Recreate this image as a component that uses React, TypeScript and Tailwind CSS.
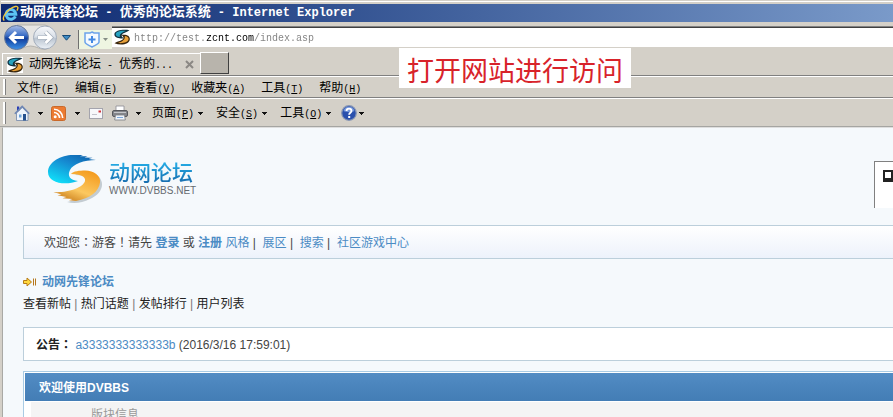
import React from 'react';

const menus = [
  { label: '文件', hotkey: 'F' },
  { label: '编辑', hotkey: 'E' },
  { label: '查看', hotkey: 'V' },
  { label: '收藏夹', hotkey: 'A' },
  { label: '工具', hotkey: 'T' },
  { label: '帮助', hotkey: 'H' },
];

const commands = [
  { label: '页面', hotkey: 'P' },
  { label: '安全', hotkey: 'S' },
  { label: '工具', hotkey: 'O' },
];

const quickLinks = ['查看新帖', '热门话题', '发帖排行', '用户列表'];

function Hotkey({ letter }: { letter: string }) {
  return (
    <span className="font-['Liberation_Mono',monospace] text-[10px]">
      (<span className="underline underline-offset-1">{letter}</span>)
    </span>
  );
}

// full width punctuation that sits in the middle of its cell
function Punct({ children }: { children: React.ReactNode }) {
  return <span className="font-['Noto_Sans_CJK_TC',sans-serif]">{children}</span>;
}

function Caret() {
  return (
    <svg className="w-[6px] h-[3px]" viewBox="0 0 6 3" shapeRendering="crispEdges">
      <path d="M0 0h5v1H0zM1 1h3v1H1zM2 2h1v1H2z" fill="#111" />
    </svg>
  );
}

function Grip() {
  return <span className="w-[3px] self-stretch my-[2px] shrink-0 border-l border-l-white border-r border-r-[#808080] bg-white" />;
}

function IeLogo() {
  return (
    <svg className="w-[17px] h-[17px]" viewBox="0 0 16 16" fill="none">
      <path d="M12.6 10.8A4.6 4.6 0 1 1 13 8.6H4.6" stroke="#5cc3f4" strokeWidth="2.8" />
      <path d="M2.2 14.6C-.4 12.5 3 7 7.5 3.8 11 1.3 14.8.4 15 2.5c.1 1-.5 2-1 2.800" stroke="#f6c93b" strokeWidth="1.300" />
    </svg>
  );
}

function Favicon() {
  return (
    <svg className="w-4 h-4 shrink-0 bg-white" viewBox="0 0 16 16">
      <path d="M15.500 1.200C10 .2.6.8.4 5.300c-.1 3.200 4.100 4.700 9.200 3.900C7.300 7.800 7 5.800 9.500 4.300c1.700-1 4-1.500 6-3.100z" fill="#12313f" />
      <path d="M12 2C7 1.400 1.800 2.600 1.700 5.300c-.1 1.600 1.700 2.600 4.300 2.800C5 5.600 7.200 3.400 12 2z" fill="#27a3c0" />
      <path d="M.5 14.200c6.500 2.600 15 1.200 15.300-4C16 6.800 12.500 5 7.200 6c3 1.400 2.900 3.900.2 5.200-2 1-4.900 1.400-6.900 3z" fill="#38250c" />
      <path d="M4 14c5.500.7 10.400-.9 10.600-3.900.1-1.700-1.600-2.900-3.900-3 .7 3.200-1.700 5.400-6.700 6.900z" fill="#e8a038" />
    </svg>
  );
}

function NavButtons() {
  return (
    <div className="w-[57px] h-7 relative">
      <svg className="absolute inset-0 w-full h-full" viewBox="0 0 57 28">
        <defs>
          <linearGradient id="back" x1="0" y1="0" x2="0" y2="1">
            <stop offset="0" stopColor="#a9bde6" />
            <stop offset=".4" stopColor="#3f71c8" />
            <stop offset=".55" stopColor="#123f9d" />
            <stop offset="1" stopColor="#3c91e8" />
          </linearGradient>
          <linearGradient id="fwd" x1="0" y1="0" x2="0" y2="1">
            <stop offset="0" stopColor="#f8f9fb" />
            <stop offset=".45" stopColor="#dbe1e9" />
            <stop offset=".55" stopColor="#bcc6d2" />
            <stop offset="1" stopColor="#edf2f7" />
          </linearGradient>
        </defs>
        <path d="M14 3h28a12.500 12.500 0 0 1 0 24.500c-5 0-9-3.500-14.500-3.500S19 27.500 14 27.500z" fill="#e6e5e3" stroke="#b5b3ae" />
        <circle cx="13.500" cy="15.500" r="12" fill="url(#back)" stroke="#65799c" />
        <circle cx="42" cy="15.500" r="11.500" fill="url(#fwd)" stroke="#a3adbb" />
        <path d="M21 15.500H7.500M13 10l-5.500 5.500L13 21" fill="none" stroke="#fff" strokeWidth="3" />
        <path d="M34.500 15.500H48M42.500 10l5.500 5.500-5.500 5.500" fill="none" stroke="#a3adba" strokeWidth="4.200" />
        <path d="M35 15.500h13M42.500 10l5.500 5.500-5.500 5.500" fill="none" stroke="#fff" strokeWidth="2.800" />
      </svg>
      <button type="button" aria-label="后退" className="absolute left-0 top-0 w-7 h-7 rounded-full" />
      <button type="button" aria-label="前进" className="absolute right-0 top-0 w-7 h-7 rounded-full" />
    </div>
  );
}

function TitleBar() {
  return (
    <div className="border-t border-[#d4d0c8] pl-px">
      <div className="border-t border-white pt-[2px]">
        <div className="h-[18px] flex items-center gap-px bg-linear-to-r from-[#0e2870] to-[#7a9ac9] text-white font-bold font-['Liberation_Mono','Noto_Sans_CJK_SC',monospace] text-[12px] leading-[18px] whitespace-pre overflow-hidden pl-px">
          <IeLogo />
          <h1><span className="text-[13px]">动网先锋论坛</span> - <span className="text-[13px]">优秀的论坛系统</span> - Internet Explorer</h1>
        </div>
      </div>
    </div>
  );
}

function AddressRow() {
  return (
    <div className="h-[26px] flex items-start pl-[3px]">
      <NavButtons />
      <button type="button" aria-label="最近网页" className="ml-[2px] mt-[13px]">
        <svg className="w-[9px] h-[6px]" viewBox="0 0 9 6">
          <path d="M.5.5h8L4.500 5.200z" fill="#3f8bc5" stroke="#174b78" />
        </svg>
      </button>
      <button type="button" aria-label="安全中心" className="ml-[7px] mt-2 w-[34px] h-[19px] flex items-center gap-[3px] pl-[5px] bg-[#eef5e1] border-l border-[#707070]">
        <svg className="w-4 h-[17px]" viewBox="0 0 16 17" fill="none">
          <path d="M8 1L10 2h5v9c0 2-3.500 3-7 5-3.500-2-7-3-7-5V2h5z" fill="#f4faff" stroke="#6ba3ea" strokeWidth="1.500" />
          <path d="M8 5v7M4.500 8.500h7" stroke="#4389e4" strokeWidth="2" />
        </svg>
        <svg className="w-[5px] h-[3px]" viewBox="0 0 5 3"><path d="M0 0h5L2.500 3z" fill="#858d85" /></svg>
      </button>
      <div className="flex-1 mt-1 h-[22px] flex items-center gap-1 bg-white border-t border-[#808080] border-b border-b-[#d4d0c8] pl-[2px] shadow-[inset_0_1px_0_#404040]">
        <Favicon />
        {/* host name is dark, the rest of the address is grey */}
        <input
          aria-label="地址"
          defaultValue="http://test.zcnt.com/index.asp"
          className="flex-1 h-[18px] pt-[2px] outline-none font-['Liberation_Mono',monospace] text-[10px] leading-4 text-transparent bg-clip-text bg-[linear-gradient(90deg,#808080_72px,#000_72px,#000_120px,#808080_120px)]"
        />
      </div>
    </div>
  );
}

function TabRow() {
  return (
    <div className="h-7 flex items-end border-b border-[#808080] pl-[2px]">
      <div className="h-[22px] w-[198px] flex items-center border-t border-l border-white pl-1 pr-[6px]">
        <Favicon />
        <span className="ml-[6px] whitespace-pre">
          动网先锋论坛<span className="font-['Liberation_Mono',monospace] text-[10px]"> - </span>优秀的<span className="font-['Liberation_Mono',monospace] text-[10px]">...</span>
        </span>
        <button type="button" aria-label="关闭选项卡" className="ml-auto">
          <svg className="w-[9px] h-[9px]" viewBox="0 0 9 9"><path d="M1 1l7 7M8 1L1 8" stroke="#8b8884" strokeWidth="2" /></svg>
        </button>
      </div>
      <button type="button" aria-label="新建选项卡" className="w-[29px] h-[22px] mb-px bg-[#b8b4ac] border border-white border-r-[#404040] border-b-[#404040]" />
    </div>
  );
}

function MenuRow() {
  return (
    <div className="h-[22px] flex items-center border-t border-t-white border-b border-b-[#808080] pl-[3px]">
      <Grip />
      <nav className="flex gap-4 ml-[11px] pt-[2px]">
        {menus.map(m => (
          <button type="button" key={m.hotkey} className="whitespace-nowrap">{m.label}<Hotkey letter={m.hotkey} /></button>
        ))}
      </nav>
    </div>
  );
}

function CommandRow() {
  return (
    <div className="h-[29px] flex items-center border-t border-t-white border-b border-b-[#a5a5a2] pl-[3px] pt-px">
      <Grip />
      <button type="button" aria-label="主页" className="flex items-center gap-2 ml-2">
        <svg className="w-4 h-4" viewBox="0 0 16 16">
          <path d="M2.500 8v7.500h11.500V8L8.300 2.500z" fill="#edf3fb" stroke="#7186a8" strokeWidth=".8" />
          <path d="M3 1.500h2.200v4L3 7z" fill="#2b3fb4" />
          <path d="M.8 8.800L8.200 1.500l7 7.300" stroke="#6f87b4" strokeWidth="1.600" fill="none" />
          <path d="M5 9.500h2.500v3H5z" fill="#6da2d8" />
          <path d="M9 9h3v6.500H9z" fill="#24508f" />
        </svg>
        <Caret />
      </button>
      <button type="button" aria-label="源" className="flex items-center gap-[9px] ml-[7px]">
        <svg className="w-[15px] h-[15px]" viewBox="0 0 15 15" fill="none">
          <rect x=".5" y=".5" width="14" height="14" rx="2" fill="#ec7b32" stroke="#c9692b" />
          <circle cx="4.200" cy="10.800" r="1.500" fill="#fff" />
          <path d="M3 6.500a5.500 5.500 0 0 1 5.500 5.500M3 3.300A8.700 8.700 0 0 1 11.700 12" stroke="#fff" strokeWidth="1.600" />
        </svg>
        <Caret />
      </button>
      <button type="button" aria-label="阅读邮件" className="ml-2">
        <svg className="w-[14px] h-[11px]" viewBox="0 0 14 11">
          <rect x=".5" y=".5" width="13" height="10" fill="#f7f7fa" stroke="#a4a4ad" />
          <path d="M3 6.500h5" stroke="#c3c3cc" />
          <path d="M9.500 2.500H12v2H9.500z" fill="#d2333a" />
        </svg>
      </button>
      <button type="button" aria-label="打印" className="flex items-center gap-2 ml-[9px]">
        <svg className="w-4 h-4" viewBox="0 0 16 16">
          <path d="M4 1h8v5H4z" fill="#fff" stroke="#8b8b92" strokeWidth=".8" />
          <rect x=".5" y="5.500" width="15" height="6" rx="1.500" fill="#84868b" stroke="#56585d" />
          <path d="M2 7.500h12" stroke="#c4c6ca" />
          <path d="M3.500 10h9l.8 5H2.700z" fill="#eef4fb" stroke="#7a7c82" strokeWidth=".8" />
          <path d="M5 12.500h6" stroke="#7da7da" />
        </svg>
        <Caret />
      </button>
      <div className="flex gap-3 ml-[10px] pt-px">
        {commands.map(c => (
          <button type="button" key={c.hotkey} className="flex items-center gap-1 whitespace-nowrap">
            <span>{c.label}<Hotkey letter={c.hotkey} /></span>
            <Caret />
          </button>
        ))}
      </div>
      <button type="button" aria-label="帮助" className="flex items-center gap-[2px] ml-[9px]">
        <svg className="w-4 h-4" viewBox="0 0 16 16" fill="none">
          <circle cx="8" cy="8" r="7.300" fill="#2a50ad" stroke="#8796b4" strokeWidth="1.200" />
          <path d="M2.500 6a5.700 5.700 0 0 1 11 0c-3 1.500-8 1.500-11 0z" fill="#7395da" />
          <path d="M5.500 6c0-3.200 5-3.200 5 0 0 1.800-2.400 1.700-2.400 3.700" stroke="#fff" strokeWidth="1.800" />
          <path d="M7.200 11h2v2h-2z" fill="#fff" />
        </svg>
        <Caret />
      </button>
    </div>
  );
}

function ForumLogo() {
  return (
    <div className="flex items-center gap-[6px]">
      <svg className="w-[56px] h-[50px]" viewBox="0 0 56 50">
        <defs>
          <linearGradient id="wave" x1=".9" y1="0" x2=".2" y2="1">
            <stop offset="0" stopColor="#0d5ea9" />
            <stop offset=".4" stopColor="#1689d0" />
            <stop offset="1" stopColor="#10e0fa" />
          </linearGradient>
          <linearGradient id="sand" x1=".8" y1="0" x2=".2" y2="1">
            <stop offset="0" stopColor="#f49a1c" />
            <stop offset=".6" stopColor="#fbc860" />
            <stop offset="1" stopColor="#c87a18" />
          </linearGradient>
        </defs>
        <path d="M27 20c6-4 18-4 24 2 7 8 1 18-9 22-8 4-16 5-23 3 13-3 28-9 30-17 1-6-6-10-22-10z" fill="#c3ccd2" transform="translate(1 1)" />
        <path d="M49 6C37 6 26 10 23 16c-3 6 0 10 8 11C18 32 1 29 1 18 1 8 14 1 26 1l10 0-3 1.200 7.500 0-3 1.300 8 .3-4 1.200z" fill="url(#wave)" />
        <path d="M24 20c2-3 9-3.500 14-3.500 9 0 16 5 15 12-1 9-10 16-24 18.500l-7-.8 3.500-1.200-10-.8 4-1.200-9-1.800 4-.7-8-2.500C20 39 36 34 38 27c1-4-4-7-14-7z" fill="url(#sand)" />
      </svg>
      <div className="font-['Liberation_Sans','Noto_Sans_CJK_SC',sans-serif]">
        <div className="text-[21px] leading-6 font-medium text-transparent bg-clip-text bg-linear-to-b from-[#25b1ea] to-[#1767a9]">动网论坛</div>
        <div className="text-[10px] leading-3 text-[#666b70]">WWW.DVBBS.NET</div>
      </div>
    </div>
  );
}

function Link({ children, bold }: { children: React.ReactNode, bold?: boolean }) {
  return <a href="#" className={bold ? 'text-[#4b8bc4] font-bold' : 'text-[#4b8bc4]'}>{children}</a>;
}

function ForumPage() {
  return (
    <main className="flex-1 min-h-0 overflow-hidden ml-[2px] border-l border-[#a9a9a5] border-t border-t-[#dedede] bg-[#f5f9fc] pl-5 text-[#444] font-['Liberation_Sans','Noto_Sans_CJK_SC',sans-serif]">
      <header className="h-[97px] flex items-start justify-between pl-6">
        <div className="pt-[26px]"><ForumLogo /></div>
        <div className="mt-[33px] w-[19px] h-[47px] bg-white border-t border-l border-[#808080] pt-2 pl-2 overflow-hidden">
          <div className="w-[10px] h-3 border-2 border-b-4 border-[#222] bg-white" />
        </div>
      </header>

      <div className="h-[34px] flex items-center border border-r-0 border-[#bccfdb] bg-linear-to-b from-white to-[#edf2fb] pl-5 pt-px whitespace-nowrap">
        <p>
          欢迎您<Punct>：</Punct>游客<Punct>！</Punct>请先 <Link bold>登录</Link> 或 <Link bold>注册</Link> <Link>风格</Link> |&nbsp; <Link>展区</Link> |&nbsp; <Link>搜索</Link> |&nbsp; <Link>社区游戏中心</Link>
        </p>
      </div>

      <div className="mt-[14px] flex items-center gap-[5px] leading-[18px]">
        <svg className="w-[14px] h-[10px]" viewBox="0 0 14 10">
          <path d="M.5 3.500H4V1l4.500 4L4 9V6.500H.5z" fill="#ffd83e" stroke="#b77b16" />
          <path d="M10.500 1.500v7M12.500 1.500v7" stroke="#b5771c" />
        </svg>
        <Link bold>动网先锋论坛</Link>
      </div>
      <div className="mt-1 leading-[18px] text-[#222]">
        {quickLinks.map((text, i) => (
          <React.Fragment key={text}>
            {i > 0 && <span className="text-[#777]"> | </span>}
            <a href="#">{text}</a>
          </React.Fragment>
        ))}
      </div>

      <div className="mt-[14px] h-[34px] flex items-center border border-r-0 border-[#bccfdb] bg-white pl-3 pt-px whitespace-nowrap">
        <p><b className="text-[#222]">公告<Punct>：</Punct></b> <Link>a3333333333333b</Link> (2016/3/16 17:59:01)</p>
      </div>

      <section className="mt-[10px] border border-r-0 border-[#a9cbe4] bg-white pt-px pl-px">
        <h2 className="h-7 flex items-center bg-linear-to-b from-[#528cc4] to-[#437db5] text-white font-bold pl-[14px] pt-px">欢迎使用DVBBS</h2>
        <div className="ml-[6px] mt-px bg-[#f4f4f4] pl-[60px] pt-1 leading-[18px] text-[#999]">版块信息</div>
      </section>
    </main>
  );
}

export default function App() {
  return (
    <div className="relative h-screen flex flex-col overflow-hidden bg-[#d4d0c8] text-black text-[12px] leading-4 font-['Noto_Sans_CJK_SC',sans-serif]">
      <TitleBar />
      <AddressRow />
      <TabRow />
      <MenuRow />
      <CommandRow />
      <ForumPage />
      <div className="absolute left-[399px] top-12 h-10 flex items-center bg-white px-2 pt-[3px] text-[27px] leading-9 text-[#d8232a] whitespace-nowrap">
        打开网站进行访问
      </div>
    </div>
  );
}
